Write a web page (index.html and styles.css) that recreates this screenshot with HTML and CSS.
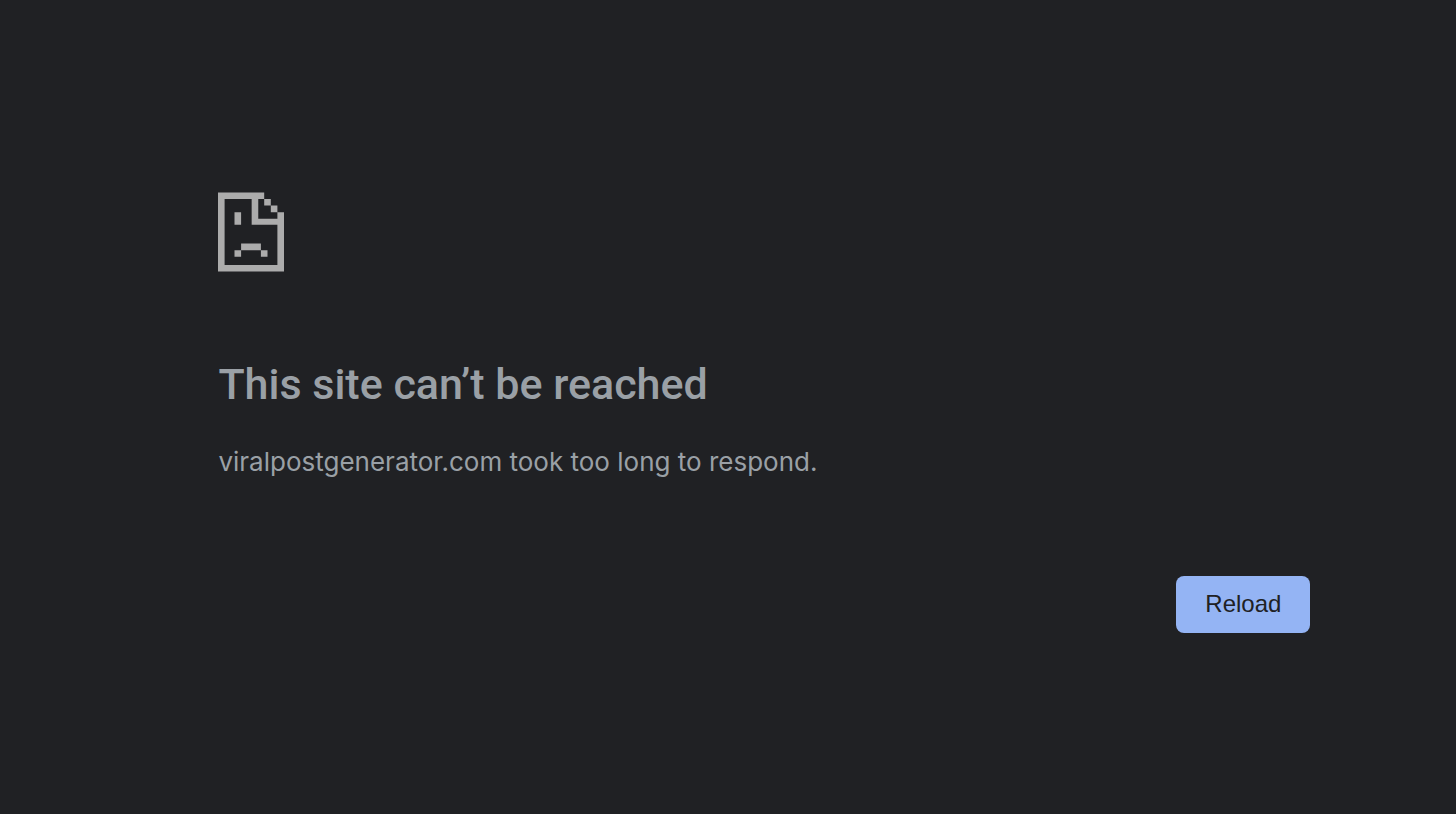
FILE: index.html
```html
<!DOCTYPE html>
<html lang="en">
<head>
    <meta charset="UTF-8">
    <meta name="viewport" content="width=device-width, initial-scale=1.0">
    <title>viralpostgenerator.com</title>
    <link rel="stylesheet" href="styles.css">
</head>
<body>
    <main class="error-page">
        <!-- Sad page icon -->
        <svg class="error-icon" viewBox="0 0 200 240" aria-hidden="true">
            <path fill-rule="evenodd" d="M0 0H140V20H160V40H180V60H200V240H0ZM20 20V220H180V98H102V20ZM122 20V80H180V60H160V40H140V20Z"/>
            <path d="M50 60H70V98H50ZM70 155H130V175H150V195H130V175H70V195H50V175H70Z"/>
        </svg>

        <h1>This site can’t be reached</h1>
        <p>viralpostgenerator.com took too long to respond.</p>

        <div class="buttons">
            <button class="btn-reload" type="button" onclick="location.reload()">Reload</button>
        </div>
    </main>
</body>
</html>
```
FILE: styles.css
```css
body {
    margin: 0;
    background-color: #202124;
    color: #9aa0a6;
    font-family: Inter, "Liberation Sans", sans-serif;
}

.error-page {
    margin: 0 10% 0 15%;
    padding: 192px 0 48px;
}

/* Icon */
.error-icon {
    display: block;
    width: 66px;
    height: 80px;
    fill: #acacac;
}

h1 {
    margin: 84px 0 0;
    font-family: Roboto, "Liberation Sans", sans-serif;
    font-size: 43px;
    font-weight: 500;
    line-height: 56px;
}

p {
    margin: 28px 0 0;
    font-size: 26px;
    line-height: 44px;
}

/* Buttons */
.buttons {
    display: flex;
    justify-content: flex-end;
    margin-top: 92px;
}

.btn-reload {
    padding: 13px 29px 15px;
    border: none;
    border-radius: 8px;
    background-color: #94b4f4;
    color: #202124;
    font-family: "Liberation Sans", Arial, sans-serif;
    font-size: 24px;
    line-height: 29px;
    cursor: pointer;
}

.btn-reload:hover {
    background-color: #a8c3f8;
}
```
